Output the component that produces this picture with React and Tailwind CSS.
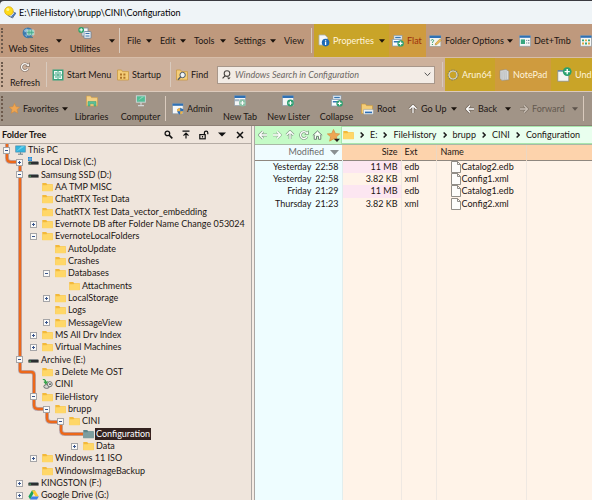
import React from "react";

/* ---------- small drawings ---------- */

function Caret({ className = "text-[#1a120c]" }) {
  return (
    <svg width="6" height="4" viewBox="0 0 6 4" className={`shrink-0 ${className}`}>
      <path d="M0 0.3h6L3 3.7z" fill="currentColor" />
    </svg>
  );
}

function AppLogo() {
  return (
    <svg width="13" height="13" viewBox="0 0 13 13" className="shrink-0">
      <path d="M7 4l4.500 3.500L8.500 12L4 9.500z" fill="#dfe7ee" stroke="#4d6580" strokeWidth="0.9" />
      <circle cx="4.900" cy="5" r="4.300" fill="#ffdc18" stroke="#d9a908" strokeWidth="0.7" />
      <path d="M7.500 11l4.200-4.200" stroke="#3f6db3" strokeWidth="1.3" />
      <circle cx="3.800" cy="3.600" r="1.500" fill="#fff68f" />
    </svg>
  );
}

function GlobeIcon() {
  return (
    <svg width="13" height="12" viewBox="0 0 13 12">
      <circle cx="6" cy="5.8" r="5.4" fill="#3a79ad" />
      <path d="M2 3.2l2.6-1.6 1.4 1-1.6 2.2-1.6.6zM2.5 7.5l2 .5.6 2.2z" fill="#8fc0dd" />
      <rect x="5" y="3" width="7" height="5" rx="0.6" fill="#7fd0b4" stroke="#d4e2e0" strokeWidth="0.8" />
      <path d="M7 3v5M9.500 3v5M5 5.500h7" stroke="#3f9f86" strokeWidth="0.6" />
      <path d="M8.500 8.400v1.600M6 10.600h5" stroke="#4e7c8c" strokeWidth="1" />
    </svg>
  );
}

function UtilitiesIcon() {
  return (
    <svg width="14" height="12" viewBox="0 0 14 12">
      <rect x="4" y="1" width="6" height="8" fill="#f6f8fa" stroke="#7c8a99" strokeWidth="0.8" />
      <rect x="6" y="4.5" width="7" height="6.8" rx="0.8" fill="#e9f0f6" stroke="#64809c" strokeWidth="0.8" />
      <path d="M7.5 6.5h4M7.5 9h4" stroke="#3c73ac" strokeWidth="1.2" />
      <circle cx="3.2" cy="2.9" r="2.9" fill="#2ea36a" />
      <path d="M3.2 1.2v3.4M1.5 2.9h3.4" stroke="#fff" strokeWidth="1" />
    </svg>
  );
}

function PropertiesIcon() {
  return (
    <svg width="12" height="13" viewBox="0 0 12 13">
      <path d="M1 1h6l2.4 2.5V11H1z" fill="#f5f7f8" stroke="#a9b1b5" strokeWidth="0.8" />
      <circle cx="7.6" cy="8.6" r="3.8" fill="#1c69b4" />
      <path d="M7.6 6.2v1.2M7.6 8v3" stroke="#fff" strokeWidth="1.3" />
    </svg>
  );
}

function ListPlusIcon() {
  return (
    <svg width="12" height="12" viewBox="0 0 12 12">
      <rect x="2" y="0.600" width="8" height="4" fill="#fafcfd" stroke="#8a9fb2" strokeWidth="0.7" />
      <rect x="0.6" y="4.600" width="8" height="6.400" fill="#fafcfd" stroke="#8a9fb2" strokeWidth="0.7" />
      <path d="M3.200 2.500h5.600M1.800 6.800h5" stroke="#3476b3" strokeWidth="1.500" />
      <circle cx="8.6" cy="8.4" r="3.2" fill="#2ea070" />
      <path d="M8.6 6.5v3.8M6.7 8.4h3.8" stroke="#fff" strokeWidth="1.1" />
    </svg>
  );
}

function FolderOptionsIcon() {
  return (
    <svg width="13" height="12" viewBox="0 0 13 12">
      <rect x="0.5" y="0.8" width="11.4" height="10.6" fill="#f3f4f0" stroke="#9b9d98" strokeWidth="0.7" />
      <rect x="0.5" y="0.6" width="11.4" height="2.4" fill="#2e70b5" />
      <path d="M2.2 5.6c0-1.4 2.4-1.4 2.4 0 0 1-1.2 1-1.2 2.2M3.4 9v1" stroke="#2f9a67" strokeWidth="1" fill="none" />
      <path d="M6.2 10l.4-1.8L10.8 4l1.4 1.4-4.2 4.2z" fill="#f0bd55" stroke="#a57a2d" strokeWidth="0.5" />
    </svg>
  );
}

function DetailsIcon() {
  return (
    <svg width="12" height="12" viewBox="0 0 12 12">
      <rect x="0.5" y="0.8" width="11" height="10.4" fill="#f5f7f7" stroke="#8f9da8" strokeWidth="0.7" />
      <rect x="0.5" y="0.6" width="11" height="2.2" fill="#2e70b5" />
      <rect x="1.8" y="4.4" width="4.2" height="4.6" fill="#36a57e" />
      <path d="M7.2 5.4h1M9 5.4h1.4M7.2 8h1M9 8h1.4" stroke="#5c7788" strokeWidth="1" />
    </svg>
  );
}

function ThumbsIcon() {
  return (
    <svg width="12" height="12" viewBox="0 0 12 12">
      <rect x="0.5" y="0.8" width="11" height="10.4" fill="#f5f7f7" stroke="#8f9da8" strokeWidth="0.7" />
      <rect x="0.5" y="0.6" width="11" height="2.2" fill="#2e70b5" />
      <path d="M2 4.4h2v1.8H2zM8 4.4h2v1.8H8zM5 7.6h2v1.8H5z" fill="#36a57e" />
      <path d="M5 4.4h2v1.8H5zM2 7.6h2v1.8H2zM8 7.6h2v1.8H8z" fill="#e0a640" />
    </svg>
  );
}

function RefreshIcon({ size = 10, color = "#f8f5f2", edge = "#85766a" }) {
  return (
    <svg width={size} height={size} viewBox="0 0 10 10">
      <path d="M8 6.6A3.4 3.4 0 1 1 7.6 3" fill="none" stroke={edge} strokeWidth="2.6" />
      <path d="M9.8 0.2v4.600H5.200z" fill={edge} />
      <path d="M8 6.6A3.4 3.4 0 1 1 7.6 3" fill="none" stroke={color} strokeWidth="1.3" />
      <path d="M9 1.6v2.400H6.600z" fill={color} />
    </svg>
  );
}

function StartMenuIcon() {
  return (
    <svg width="12" height="12" viewBox="0 0 12 12">
      <rect x="0.5" y="0.5" width="11" height="11" fill="#3aa37e" />
      <rect x="2" y="2" width="8" height="8" fill="#f0faf6" />
      <path d="M6 2v8M2 6h8" stroke="#3aa37e" strokeWidth="1" />
      <path d="M3 3h2v2H3zM7 3h2v2H7zM3 7h2v2H3zM7 7h2v2H7z" fill="#8fd0bb" />
    </svg>
  );
}

function StartupIcon() {
  return (
    <svg width="12" height="12" viewBox="0 0 12 12">
      <path d="M0.5 1h4l1 1.6h6V11h-11z" fill="#f4cd78" stroke="#c99637" strokeWidth="0.7" />
      <path d="M3 4.6h2v2H3zM6.4 4.6h2v2h-2zM3 7.8h2v2H3zM6.4 7.8h2v2h-2z" fill="#b0762a" />
    </svg>
  );
}

function FindIcon() {
  return (
    <svg width="12" height="12" viewBox="0 0 12 12">
      <path d="M0.5 1h4l1 1.6h6V11h-11z" fill="#f4cd78" stroke="#c99637" strokeWidth="0.7" />
      <circle cx="6.6" cy="6" r="2.7" fill="#eef4f8" stroke="#4e5a66" strokeWidth="1" />
      <path d="M4.6 8L2 10.8" stroke="#4e5a66" strokeWidth="1.4" />
    </svg>
  );
}

function SearchGlyph() {
  return (
    <svg width="9" height="10" viewBox="0 0 9 10" className="shrink-0">
      <circle cx="5" cy="3.6" r="2.8" fill="none" stroke="#4b4642" strokeWidth="1.1" />
      <path d="M3 5.800L0.600 8.400" stroke="#3b3632" strokeWidth="1.100" />
      <path d="M5 7.600h3.600L6.800 9.400z" fill="#3b3632" />
    </svg>
  );
}

function GearIcon() {
  return (
    <svg width="12" height="12" viewBox="0 0 12 12">
      <circle cx="6" cy="6" r="4.400" fill="none" stroke="#77745f" strokeWidth="2.200" strokeDasharray="1.400 0.900" />
      <circle cx="6" cy="6" r="4" fill="none" stroke="#dddccb" strokeWidth="1.200" />
    </svg>
  );
}

function NotePadIcon() {
  return (
    <svg width="11" height="12" viewBox="0 0 11 12">
      <path d="M1 1.4l6-.8 2.8 1.6v8.6L3 11.4 1 9.6z" fill="#d8dadb" stroke="#8e8c86" strokeWidth="0.6" />
      <path d="M3 2.4v9M5 2l.2 9M7 1.800l.2 9" stroke="#aeb2b4" strokeWidth="0.8" />
    </svg>
  );
}

function UndoPlusIcon() {
  return (
    <svg width="15" height="15" viewBox="0 0 15 15" className="shrink-0">
      <rect x="0.8" y="3.4" width="11" height="10.8" fill="#f4f4f1" stroke="#8d8f88" strokeWidth="0.8" />
      <path d="M1 4h10.6" stroke="#4d7ba6" strokeWidth="1.2" />
      <circle cx="10.2" cy="4.6" r="4.4" fill="#2aa06e" />
      <path d="M10.2 2v5.2M7.6 4.6h5.2" stroke="#fff" strokeWidth="1.4" />
    </svg>
  );
}

function StarIcon({ size = 11, dropdown = false }) {
  return (
    <svg width={size} height={size} viewBox="0 0 12 12" className="shrink-0">
      <path
        d="M6 0.4l1.700 3.700 4 .4-3 2.700.9 4L6 9.200l-3.600 2 .9-4-3-2.700 4-.4z"
        fill="#efa652"
        stroke="#d28a3a"
        strokeWidth="0.6"
      />
      {dropdown && <path d="M6.500 9H12L9.200 12z" fill="#222" />}
    </svg>
  );
}

function LibrariesIcon() {
  return (
    <svg width="12" height="12" viewBox="0 0 12 12">
      <path d="M0.5 1h4l1 1.6h6V11h-11z" fill="#f3cf85" stroke="#cf9b44" strokeWidth="0.6" />
      <path d="M2 11V6.6h8V11H8V8.8H4V11z" fill="#5cc39b" stroke="#36946f" strokeWidth="0.5" />
    </svg>
  );
}

function ComputerIcon() {
  return (
    <svg width="12" height="12" viewBox="0 0 12 12">
      <rect x="1.4" y="0.8" width="9" height="6.4" fill="#52bd94" stroke="#c9d3d3" strokeWidth="1" />
      <path d="M2.4 6L7 1.6h2.6z" fill="#8bd9bb" />
      <path d="M6 7.4v2.4M3 10.6h6" stroke="#d2d7d8" strokeWidth="1.3" />
    </svg>
  );
}

function AdminIcon() {
  return (
    <svg width="12" height="12" viewBox="0 0 12 12">
      <rect x="0.5" y="0.8" width="10.6" height="10" fill="#f5f7f8" stroke="#8c98a4" strokeWidth="0.7" />
      <rect x="0.5" y="0.6" width="10.6" height="2.2" fill="#2e70b5" />
      <path d="M5 6.2l3.2-1.4 3.2 1.4c0 2.8-1.2 4.6-3.2 5.6-2-1-3.2-2.8-3.2-5.6z" fill="#2d6fb8" />
      <path d="M8.2 4.8v3.4h3c-.4 1.700-1.400 2.900-3 3.600V8.200H5.200c-.2-.6-.2-1.300-.2-2z" fill="#f1b54a" />
    </svg>
  );
}

function WindowPlusIcon({ tab = false }) {
  return (
    <svg width="13" height="12" viewBox="0 0 13 12">
      <rect x="0.5" y="0.8" width="11" height="9.800" fill="#f3f5f6" stroke="#8f9ba6" strokeWidth="0.7" />
      <rect x="0.5" y="0.6" width="11" height="2.400" fill="#2e70b5" />
      {tab && <path d="M1 4.200h4.500v2H1zM6 4.200h5v1H6z" fill="#9fb4c4" />}
      <circle cx="8.400" cy="8" r="3.400" fill={tab ? "#8ac2a6" : "#2ea070"} />
      <path d="M8.400 6v4M6.400 8h4" stroke="#fff" strokeWidth="1.100" />
    </svg>
  );
}

function RootIcon() {
  return (
    <svg width="13" height="12" viewBox="0 0 13 12">
      <path d="M0.5 1h4l1 1.600h6V10.500h-11z" fill="#f4cd78" stroke="#c99637" strokeWidth="0.6" />
      <rect x="2.500" y="6.400" width="9.800" height="4.800" rx="0.600" fill="#eef2f4" stroke="#8b97a0" strokeWidth="0.500" />
      <path d="M4 9.400h7" stroke="#2d6fb8" strokeWidth="1.600" />
    </svg>
  );
}

function Arrow({ dir = "left", color = "#fff", edge = "#6f6358" }) {
  const d = {
    left: "M9 5H1.800M5 1.500L1.500 5L5 8.500",
    right: "M1 5h7.200M5 1.500L8.500 5L5 8.500",
    up: "M5 9V1.800M1.500 5L5 1.500L8.500 5",
  }[dir];
  return (
    <svg width="10" height="10" viewBox="0 0 10 10" className="shrink-0">
      <path d={d} fill="none" stroke={edge} strokeWidth="2.800" />
      <path d={d} fill="none" stroke={color} strokeWidth="1.300" />
    </svg>
  );
}

function HomeIcon() {
  return (
    <svg width="11" height="10" viewBox="0 0 11 10" className="shrink-0">
      <path d="M0.800 5.400L5.500 0.900l4.700 4.500M2.200 4.800v4.500h2.300V6.400h2v2.900h2.300V4.800" fill="#fff" stroke="#6e7f74" strokeWidth="1" />
    </svg>
  );
}

function FolderIcon({ muted = false }) {
  return (
    <svg width="11" height="10" viewBox="0 0 11 10" className="shrink-0">
      <path d="M0.300 1h3.900l1 1.300h5.500V9H0.300z" fill={muted ? "#5d868b" : "#f3b93a"} />
      <path d="M0.300 3.200h4.200l1-0.700h5.200V9.200H0.300z" fill={muted ? "#7c9ea0" : "#ffd768"} />
    </svg>
  );
}

function PcIcon() {
  return (
    <svg width="11" height="10" viewBox="0 0 11 10" className="shrink-0">
      <rect x="0.400" y="0.600" width="10.200" height="6.800" fill="#2c7fa6" />
      <rect x="1" y="1.200" width="9" height="5.600" fill="#35b4dc" />
      <path d="M1 6.800L6.500 1.200H10z" fill="#6fd2ec" />
      <path d="M5.500 7.400v1.400M3 9.200h5" stroke="#56707c" strokeWidth="0.900" />
    </svg>
  );
}

function DriveIcon({ windows = false }) {
  return (
    <svg width="11" height="10" viewBox="0 0 11 10" className="shrink-0">
      {windows && <path d="M0 0h1.800v1.800H0zM2.200 0H4v1.800H2.200zM0 2.200h1.800V4H0zM2.200 2.200H4V4H2.200z" fill="#1b86d8" />}
      <path d="M1.200 4h8.600l.8 1.200H0.400z" fill="#9ea3a6" />
      <rect x="0.400" y="4.800" width="10.200" height="2.800" fill="#2b2f31" />
      <rect x="1.400" y="5.700" width="1.400" height="1" fill="#4fd06f" />
    </svg>
  );
}

function GoogleDriveIcon() {
  return (
    <svg width="11" height="10" viewBox="0 0 11 10" className="shrink-0">
      <path d="M3.900 0.400h3.200L2.200 9.400L0.400 6.500z" fill="#1da35b" />
      <path d="M3.900 0.400h3.200l3.700 6.200H7.400z" fill="#fcc934" />
      <path d="M3.700 6.600h7.100L9 9.400H2.200z" fill="#3f80ea" />
    </svg>
  );
}

function CiniIcon() {
  return (
    <svg width="11" height="10" viewBox="0 0 11 10" className="shrink-0">
      <ellipse cx="4.600" cy="7.500" rx="2.800" ry="1.900" fill="#d6d6d0" stroke="#55585a" strokeWidth="0.800" />
      <ellipse cx="7.800" cy="5.200" rx="2.400" ry="2.600" fill="#e4e4df" stroke="#55585a" strokeWidth="0.800" />
      <circle cx="8" cy="5.200" r="0.900" fill="#4b4e50" />
      <path d="M0.800 0.200c2.300.2 3 1.500 3 3.200M2 2.600l1.900 2.200L5.400 2.300" stroke="#2ea043" strokeWidth="1.200" fill="none" />
    </svg>
  );
}

function FileIcon() {
  return (
    <svg width="10" height="12" viewBox="0 0 10 12" className="shrink-0">
      <path d="M0.500 0.500h6L9.500 3.500v8H0.500z" fill="#fdfdfb" stroke="#85817c" strokeWidth="0.900" />
      <path d="M6.500 0.500v3h3" fill="none" stroke="#85817c" strokeWidth="0.900" />
    </svg>
  );
}

/* ---------- toolbars ---------- */

function Toolbar({ label, className, children }) {
  return (
    <div role="toolbar" aria-label={label} className={`flex h-[34px] shrink-0 items-stretch overflow-hidden border-b pl-px ${className}`}>
      <div className="my-1 w-[3px] shrink-0 border-l-2 border-dotted border-[#6d5a4c]" />
      {children}
    </div>
  );
}

function Divider() {
  return <div className="my-1 w-[3px] shrink-0 border-l border-[#d9cabd]" />;
}

function BigButton({ icon, label, className }) {
  return (
    <button type="button" className={`flex shrink-0 flex-col items-center justify-between whitespace-nowrap pb-[2px] pt-[3px] ${className}`}>
      <span className="flex h-[12px] items-center">{icon}</span>
      <span className="leading-[12px]">{label}</span>
    </button>
  );
}

function ToolButton({ icon, label, caret, caretClass, className }) {
  return (
    <button type="button" className={`flex shrink-0 items-center gap-[3px] whitespace-nowrap ${className}`}>
      {icon}
      <span className="leading-[12px]">{label}</span>
      {caret && (
        <span className="ml-auto">
          <Caret className={caretClass} />
        </span>
      )}
    </button>
  );
}

function CaretButton({ label, className }) {
  return (
    <button type="button" aria-label={label} className={`flex shrink-0 items-center justify-center ${className}`}>
      <Caret />
    </button>
  );
}

/* ---------- folder tree ---------- */

const indent = ["pl-[3px]", "pl-[16px]", "pl-[30px]", "pl-[43px]", "pl-[57px]", "pl-[71px]"];

const tree = [
  { level: 0, box: "-", icon: <PcIcon />, name: "This PC" },
  { level: 1, box: "+", icon: <DriveIcon windows />, name: "Local Disk (C:)" },
  { level: 1, box: "-", icon: <DriveIcon />, name: "Samsung SSD (D:)" },
  { level: 2, name: "AA TMP MISC" },
  { level: 2, name: "ChatRTX Test Data" },
  { level: 2, name: "ChatRTX Test Data_vector_embedding" },
  { level: 2, box: "+", name: "Evernote DB after Folder Name Change 053024" },
  { level: 2, box: "-", name: "EvernoteLocalFolders" },
  { level: 3, name: "AutoUpdate" },
  { level: 3, name: "Crashes" },
  { level: 3, box: "-", name: "Databases" },
  { level: 4, name: "Attachments" },
  { level: 3, box: "+", name: "LocalStorage" },
  { level: 3, name: "Logs" },
  { level: 3, box: "+", name: "MessageView" },
  { level: 2, box: "+", name: "MS All Drv Index" },
  { level: 2, box: "+", name: "Virtual Machines" },
  { level: 1, box: "-", icon: <DriveIcon />, name: "Archive (E:)" },
  { level: 2, name: "a Delete Me OST" },
  { level: 2, icon: <CiniIcon />, name: "CINI" },
  { level: 2, box: "-", name: "FileHistory" },
  { level: 3, box: "-", name: "brupp" },
  { level: 4, box: "-", name: "CINI" },
  { level: 5, icon: <FolderIcon muted />, name: "Configuration", selected: true },
  { level: 5, box: "+", name: "Data" },
  { level: 2, box: "+", name: "Windows 11 ISO" },
  { level: 2, name: "WindowsImageBackup" },
  { level: 1, box: "+", icon: <DriveIcon />, name: "KINGSTON (F:)" },
  { level: 1, box: "+", icon: <GoogleDriveIcon />, name: "Google Drive (G:)" },
];

function Expander({ kind }) {
  return (
    <svg width="7" height="7" viewBox="0 0 7 7" className="shrink-0">
      <rect x="0.500" y="0.500" width="6" height="6" fill="#fbfaf8" stroke="#a5a5a8" />
      <path d={kind === "+" ? "M2 3.500h3M3.500 2v3" : "M2 3.500h3"} stroke="#3a558c" />
    </svg>
  );
}

function TreeRow({ level, box, icon, name, selected }) {
  return (
    <li className={`flex h-[12px] items-center whitespace-nowrap nth-[3n]:h-[13px] ${indent[level]}`}>
      <span className="mr-[5px] flex w-[7px] shrink-0">{box && <Expander kind={box} />}</span>
      {icon || <FolderIcon />}
      <span className={`ml-px px-px leading-[12px] ${selected ? "bg-[#33221f] text-white" : ""}`}>{name}</span>
    </li>
  );
}

function Connector() {
  const d =
    "M7 0V14Q7 18 11 18H20V226Q20 228 22 228H31Q34 228 34 231V261Q34 265 38 265H47V274Q47 278 51 278H61V286Q61 290 65 290H83";
  return (
    <svg width="90" height="300" viewBox="0 0 90 300" className="absolute left-0 top-0" aria-hidden="true">
      <path d={d} fill="none" stroke="#b9a9b0" strokeWidth="4" />
      <path d={d} fill="none" stroke="#ec681a" strokeWidth="2.400" />
    </svg>
  );
}

function PanelButton({ label, children }) {
  return (
    <button type="button" aria-label={label} className="flex w-[18px] justify-center">
      {children}
    </button>
  );
}

function FolderTree() {
  return (
    <section className="flex w-[252px] shrink-0 flex-col overflow-hidden border-r border-[#aaa6a3] bg-[#efe5dc]">
      <header className="flex h-[18px] shrink-0 items-center border-b border-[#b5aca4] pl-[2px] pr-[2px]">
        <h2 className="mr-auto font-bold leading-[12px] text-[#1a1411]">Folder Tree</h2>
        <PanelButton label="Find folder">
          <svg width="9" height="9" viewBox="0 0 9 9">
            <circle cx="3.400" cy="3.400" r="2.300" fill="none" stroke="#111" strokeWidth="1.300" />
            <path d="M5 5l3.300 3.300" stroke="#111" strokeWidth="1.700" />
          </svg>
        </PanelButton>
        <PanelButton label="Go to top">
          <svg width="8" height="9" viewBox="0 0 8 9">
            <path d="M0.500 1.200h7M4 8.500V3.500M1.500 5.700L4 3.200l2.500 2.500" fill="none" stroke="#111" strokeWidth="1.200" />
          </svg>
        </PanelButton>
        <PanelButton label="Lock">
          <svg width="10" height="10" viewBox="0 0 10 10">
            <rect x="0.800" y="4.600" width="5.400" height="4.200" fill="none" stroke="#111" strokeWidth="1.200" />
            <path d="M5.400 4.600V2.800a1.700 1.700 0 0 1 3.400 0v1.400M3.500 6v1.400" fill="none" stroke="#111" strokeWidth="1.200" />
          </svg>
        </PanelButton>
        <PanelButton label="Menu">
          <svg width="8" height="5" viewBox="0 0 8 5">
            <path d="M0 0.500h8L4 4.500z" fill="#111" />
          </svg>
        </PanelButton>
        <PanelButton label="Close">
          <svg width="8" height="8" viewBox="0 0 8 8">
            <path d="M1 1l6 6M7 1L1 7" stroke="#111" strokeWidth="1.500" />
          </svg>
        </PanelButton>
      </header>
      <div className="relative min-h-0 flex-1 overflow-hidden">
        <Connector />
        <ul className="relative">
          {tree.map((row, i) => (
            <TreeRow key={i} {...row} />
          ))}
        </ul>
      </div>
    </section>
  );
}

/* ---------- file list ---------- */

const files = [
  { day: "Yesterday", time: "22:58", size: "11 MB", ext: "edb", name: "Catalog2.edb" },
  { day: "Yesterday", time: "22:58", size: "3.82 KB", ext: "xml", name: "Config1.xml" },
  { day: "Friday", time: "21:29", size: "11 MB", ext: "edb", name: "Catalog1.edb" },
  { day: "Thursday", time: "21:23", size: "3.82 KB", ext: "xml", name: "Config2.xml" },
];

const crumbs = ["E:", "FileHistory", "brupp", "CINI", "Configuration"];

function Chevron() {
  return (
    <svg width="4" height="6" viewBox="0 0 4 6" className="shrink-0">
      <path d="M0.600 0.500L3.100 3L0.600 5.500" fill="none" stroke="#1c1c1c" strokeWidth="1.500" />
    </svg>
  );
}

function PathBar() {
  return (
    <nav aria-label="Path" className="flex h-[19px] shrink-0 items-stretch border-b border-[#a9b8a6] bg-[#c5fbc7]">
      <div className="flex w-[86px] shrink-0 items-center justify-between pl-[3px] pr-px">
        <button type="button" aria-label="Back"><Arrow dir="left" edge="#86a189" /></button>
        <button type="button" aria-label="Forward"><Arrow dir="right" edge="#9cc09f" /></button>
        <button type="button" aria-label="Up"><Arrow dir="up" edge="#86a189" /></button>
        <button type="button" aria-label="Reload"><RefreshIcon color="#fff" edge="#7f9a82" /></button>
        <button type="button" aria-label="Home"><HomeIcon /></button>
        <button type="button" aria-label="Favorites"><StarIcon size={13} dropdown /></button>
      </div>
      <div className="flex min-w-0 flex-1 items-center gap-[6px] overflow-hidden whitespace-nowrap border-y border-l border-[#a8e6ac] bg-[#e9ffee] pl-px">
        <FolderIcon />
        {crumbs.map((c) => (
          <React.Fragment key={c}>
            <Chevron />
            <a href="#" className="leading-[12px]">{c}</a>
          </React.Fragment>
        ))}
      </div>
    </nav>
  );
}

function FileList() {
  return (
    <table className="h-full w-full table-fixed border-collapse">
      <colgroup>
        <col className="w-[87px]" />
        <col className="w-[59px]" />
        <col className="w-[35px]" />
        <col className="w-[90px]" />
        <col />
      </colgroup>
      <thead>
        <tr className="h-[15px] border-b border-[#8f877f] bg-[#fdd3ac]">
          <th scope="col" className="bg-[#f0fcff] p-0 pr-[3px] font-normal text-[#6b6b6b]">
            <span className="flex items-center justify-end gap-[6px] leading-[12px]">
              Modified
              <svg width="9" height="5" viewBox="0 0 9 5"><path d="M0 0h9L4.500 5z" fill="#8a8f91" /></svg>
            </span>
          </th>
          <th scope="col" className="border-r border-[#ecd7c2] p-0 pr-[3px] text-right font-normal leading-[12px]">Size</th>
          <th scope="col" className="border-r border-[#ecd7c2] p-0 pl-[3px] text-left font-normal leading-[12px]">Ext</th>
          <th scope="col" className="border-r border-[#ecd7c2] p-0 pl-1 text-left font-normal leading-[12px]">Name</th>
          <th className="p-0" />
        </tr>
      </thead>
      <tbody>
        {files.map((f, i) => (
          <tr key={f.name} className="h-[12px] whitespace-nowrap nth-[3n]:h-[13px]">
            <td className="border-r border-[#e2eeee] bg-[#eefdff] p-0 pr-[3px] text-right leading-[12px]">
              <span className="mr-[4px]">{f.day}</span>
              <span>{f.time}</span>
            </td>
            <td className={`border-r border-[#efe8e2] p-0 pr-[3px] text-right leading-[12px] ${i % 2 === 0 ? "bg-[#fce6f1]" : ""}`}>{f.size}</td>
            <td className="border-r border-[#efe8e2] p-0 pl-[3px] leading-[12px]">{f.ext}</td>
            <td className="border-r border-[#efe8e2] p-0 pl-[14px] leading-[12px]">
              <span className="flex items-center gap-px"><FileIcon />{f.name}</span>
            </td>
            <td className="p-0" />
          </tr>
        ))}
        <tr>
          <td className="border-r border-[#e2eeee] bg-[#eefdff]" />
          <td className="border-r border-[#efe8e2]" />
          <td className="border-r border-[#efe8e2]" />
          <td className="border-r border-[#efe8e2]" />
          <td />
        </tr>
      </tbody>
    </table>
  );
}

/* ---------- window ---------- */

export default function App() {
  return (
    <div className="flex h-screen w-full flex-col overflow-hidden bg-[#3a3a40] pt-px font-[Lato,'Noto_Sans',sans-serif] text-[9px] text-[#1c1613]">
      <header className="flex h-[23px] shrink-0 items-center gap-[2px] rounded-tl-[4px] bg-[#eff4f7] pl-1">
        <AppLogo />
        <h1 className="leading-[12px] text-black">E:\FileHistory\brupp\CINI\Configuration</h1>
      </header>

      <Toolbar label="Menu" className="border-[#d7bda9] bg-[#bf997d]">
        <BigButton icon={<GlobeIcon />} label="Web Sites" className="w-[49px]" />
        <CaretButton label="Web Sites menu" className="w-[12px]" />
        <BigButton icon={<UtilitiesIcon />} label="Utilities" className="w-[40px]" />
        <CaretButton label="Utilities menu" className="w-[14px]" />
        <Divider />
        <ToolButton label="File" caret className="w-[30px] pl-[5px]" />
        <ToolButton label="Edit" caret className="w-[34px] pl-[8px]" />
        <ToolButton label="Tools" caret className="w-[40px] pl-[8px]" />
        <ToolButton label="Settings" caret className="w-[50px] pl-[8px]" />
        <ToolButton label="View" className="w-[35px] pl-[8px]" />
        <Divider />
        <ToolButton icon={<PropertiesIcon />} label="Properties" caret className="w-[75px] bg-[#c9a428] px-1 text-[#fff4dc]" />
        <ToolButton icon={<ListPlusIcon />} label="Flat" className="w-[37px] bg-[#cf9b3e] pl-[3px] text-[#9c2f0c]" />
        <ToolButton icon={<FolderOptionsIcon />} label="Folder Options" caret className="w-[87px] pl-[3px]" />
        <ToolButton icon={<DetailsIcon />} label="Det+Tmb" className="w-[67px] pl-[6px]" />
        <button type="button" aria-label="Thumbnails" className="flex shrink-0 items-center">
          <ThumbsIcon />
        </button>
      </Toolbar>

      <Toolbar label="Search" className="border-[#dccabc] bg-[#cdb19c]">
        <BigButton icon={<RefreshIcon />} label="Refresh" className="w-[42px]" />
        <Divider />
        <ToolButton icon={<StartMenuIcon />} label="Start Menu" className="w-[65px] pl-[3px]" />
        <ToolButton icon={<StartupIcon />} label="Startup" className="w-[56px] pl-[3px]" />
        <Divider />
        <ToolButton icon={<FindIcon />} label="Find" className="w-[44px] pl-[3px]" />
        <div className="flex h-[18px] w-[218px] shrink-0 items-center self-center border border-[#a8978a] bg-[#f3ece6] pl-1 pr-[3px]">
          <SearchGlyph />
          <input
            type="text"
            aria-label="Windows Search"
            placeholder="Windows Search in Configuration"
            className="min-w-0 flex-1 bg-transparent pl-1 italic leading-[12px] outline-none placeholder:text-[#6d6763]"
          />
          <button type="button" aria-label="Search history">
            <svg width="7" height="5" viewBox="0 0 7 5"><path d="M0.700 0.700L3.500 3.700L6.300 0.700" fill="none" stroke="#555" /></svg>
          </button>
        </div>
        <div className="w-[7px] shrink-0" />
        <Divider />
        <ToolButton icon={<GearIcon />} label="Arun64" className="w-[50px] bg-[#c9a428] pl-[2px] text-[#fff4dc]" />
        <ToolButton icon={<NotePadIcon />} label="NotePad" className="w-[56px] bg-[#cf9b3e] pl-[4px] text-[#fff4dc]" />
        <ToolButton icon={<UndoPlusIcon />} label="Und" className="flex-1 bg-[#c9a428] pl-[6px] text-[#fff4dc]" />
      </Toolbar>

      <Toolbar label="Navigation" className="border-[#8d7f75] bg-[#a19487]">
        <ToolButton icon={<StarIcon />} label="Favorites" caret className="w-[63px] pl-[5px]" />
        <BigButton icon={<LibrariesIcon />} label="Libraries" className="w-[49px]" />
        <BigButton icon={<ComputerIcon />} label="Computer" className="w-[49px]" />
        <Divider />
        <ToolButton icon={<AdminIcon />} label="Admin" className="w-[48px] pl-[4px]" />
        <BigButton icon={<WindowPlusIcon tab />} label="New Tab" className="w-[48px]" />
        <BigButton icon={<WindowPlusIcon />} label="New Lister" className="w-[49px]" />
        <BigButton icon={<ListPlusIcon />} label="Collapse" className="w-[47px]" />
        <ToolButton icon={<RootIcon />} label="Root" className="w-[44px] pl-[1px]" />
        <ToolButton icon={<Arrow dir="up" />} label="Go Up" caret className="w-[53px] pl-1" />
        <ToolButton icon={<Arrow dir="left" />} label="Back" caret className="w-[54px] pl-[8px]" />
        <ToolButton
          icon={<Arrow dir="right" color="#c9bfb5" edge="#81766b" />}
          label="Forward"
          caret
          caretClass="text-[#5d534b]"
          className="w-[67px] pl-[8px] text-[#63594f]"
        />
        <div className="w-[5px] shrink-0" />
        <Divider />
      </Toolbar>

      <div className="flex min-h-0 flex-1 bg-[#f5ece4]">
        <FolderTree />
        <main className="ml-[2px] flex min-w-0 flex-1 flex-col border-l border-[#aaa6a3] bg-[#fff3e8]">
          <PathBar />
          <div className="min-h-0 flex-1">
            <FileList />
          </div>
        </main>
      </div>
    </div>
  );
}
